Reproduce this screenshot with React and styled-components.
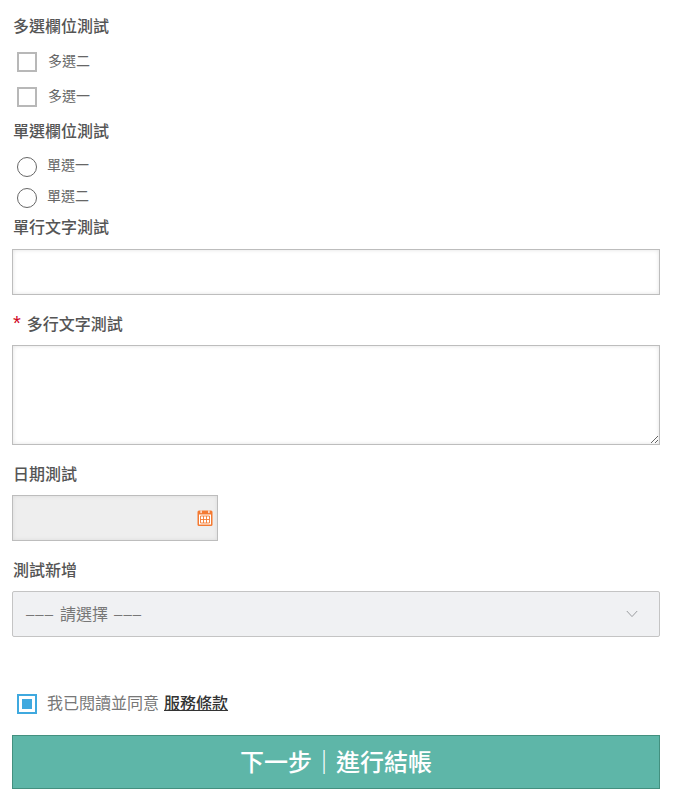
import styled, { createGlobalStyle } from "styled-components";

const GlobalStyle = createGlobalStyle`
    body {
        margin: 0;
        background: #fff;
        font-family: "Noto Sans CJK TC", "Liberation Sans", sans-serif;
        color: #555;
    }
`;

function CalendarIcon() {
    return (
        <svg width="16" height="16" viewBox="0 0 16 16" fill="none">
            <rect x="0.5" y="0.5" width="15" height="15.5" rx="1.5" fill="#f47a32" />
            <rect x="2" y="4.5" width="12" height="10" fill="#fff" />
            <rect x="3.5" y="0.5" width="1.2" height="2.6" fill="#fff" />
            <rect x="11.3" y="0.5" width="1.2" height="2.6" fill="#fff" />
            <path d="M3.5 6h9v7h-9zM6.5 6v7M9.5 6v7M3.5 9.5h9" stroke="#f47a32" strokeWidth="0.9" />
        </svg>
    );
}

function Chevron() {
    return (
        <svg width="12" height="8" viewBox="0 0 12 8" fill="none">
            <path d="M0.8 1l5.2 5.6L11.2 1" stroke="#9a9c9f" strokeWidth="1" />
        </svg>
    );
}

export default function App() {
    return <Page>
        <GlobalStyle />

        <Label>多選欄位測試</Label>
        <CheckList>
            <CheckRow><CheckBox /><CheckText>多選二</CheckText></CheckRow>
            <CheckRow><CheckBox /><CheckText>多選一</CheckText></CheckRow>
        </CheckList>

        <Label>單選欄位測試</Label>
        <RadioList>
            <RadioRow><Radio /><RadioText>單選一</RadioText></RadioRow>
            <RadioRow><Radio /><RadioText>單選二</RadioText></RadioRow>
        </RadioList>

        <Label>單行文字測試</Label>
        <TextField type="text" />

        <Label $gap><Required>*</Required>多行文字測試</Label>
        <TextArea />

        <Label $gap>日期測試</Label>
        <DateBox>
            <CalendarIcon />
        </DateBox>

        <Label $gap>測試新增</Label>
        <SelectBox>
            <SelectText><Dashes>–––</Dashes>請選擇<Dashes>–––</Dashes></SelectText>
            <Chevron />
        </SelectBox>

        <AgreeRow>
            <AgreeBox><AgreeMark /></AgreeBox>
            <AgreeText>我已閱讀並同意</AgreeText>
            <TermsLink href="#">服務條款</TermsLink>
        </AgreeRow>

        <NextButton>下一步<Divider>｜</Divider>進行結帳</NextButton>
    </Page>;
}

const Page = styled.div`
    display: flex;
    flex-direction: column;
    box-sizing: border-box;
    width: 674px;
    height: 805px;
    padding: 17px 14px 0 12px;
    overflow: hidden;
`;

const Label = styled.div`
    display: flex;
    align-items: center;
    box-sizing: border-box;
    height: 20px;
    padding: 0 0 4px 1px;
    margin-top: ${({ $gap }) => ($gap ? "20px" : "0")};
    font-size: 16px;
    font-weight: 500;
    line-height: 20px;
    color: #555;
`;

const Required = styled.span`
    margin-right: 6px;
    color: #d0021b;
    font-size: 20px;
    font-weight: 400;
    font-family: "Liberation Sans", sans-serif;
`;

const CheckList = styled.div`
    display: flex;
    flex-direction: column;
    gap: 15px;
    padding: 15px 0 15px 5px;
`;

const CheckRow = styled.label`
    display: flex;
    align-items: center;
    height: 20px;
`;

const CheckBox = styled.span`
    box-sizing: border-box;
    width: 20px;
    height: 20px;
    border: 2px solid #b8b8b8;
    background: #fff;
`;

const CheckText = styled.span`
    margin: -4px 0 0 11px;
    font-size: 14px;
    color: #666;
`;

const RadioList = styled.div`
    display: flex;
    flex-direction: column;
    gap: 11px;
    padding: 15px 0 10px 5px;
`;

const RadioRow = styled.label`
    display: flex;
    align-items: center;
    height: 20px;
`;

const Radio = styled.span`
    box-sizing: border-box;
    width: 20px;
    height: 20px;
    border: 1px solid #666;
    border-radius: 50%;
    background: #fff;
`;

const RadioText = styled.span`
    margin: -6px 0 0 10px;
    font-size: 14px;
    color: #666;
`;

const TextField = styled.input`
    box-sizing: border-box;
    flex: none;
    width: 648px;
    height: 46px;
    margin-top: 11px;
    border: 1px solid #bdbdbd;
    box-shadow: inset 0 0 4px rgba(0, 0, 0, 0.12);
    outline: none;
`;

const TextArea = styled.textarea`
    display: block;
    box-sizing: border-box;
    flex: none;
    width: 648px;
    height: 100px;
    margin-top: 10px;
    border: 1px solid #bdbdbd;
    box-shadow: inset 0 0 4px rgba(0, 0, 0, 0.12);
    outline: none;
`;

const DateBox = styled.div`
    display: flex;
    align-items: center;
    justify-content: flex-end;
    box-sizing: border-box;
    width: 206px;
    height: 46px;
    margin-top: 10px;
    padding: 0 4px 0 0;
    border: 1px solid #bdbdbd;
    background: #eeeeee;
    box-shadow: inset 0 0 4px rgba(0, 0, 0, 0.08);
`;

const SelectBox = styled.div`
    display: flex;
    align-items: center;
    justify-content: space-between;
    box-sizing: border-box;
    width: 648px;
    height: 46px;
    margin-top: 10px;
    padding: 0 21px 0 13px;
    border: 1px solid #c4c4c4;
    border-radius: 2px;
    background: #f0f1f3;
    font-size: 16px;
    color: #777;
`;

const SelectText = styled.span`
    display: inline-flex;
    align-items: center;
    gap: 6px;
    margin-top: -2px;
`;

const Dashes = styled.span`
    font-family: "Liberation Sans", sans-serif;
    font-size: 15px;
    letter-spacing: 1px;
`;

const AgreeRow = styled.div`
    display: flex;
    align-items: center;
    height: 20px;
    margin-top: 57px;
    padding-left: 5px;
    font-size: 16px;
    line-height: 18px;
`;

const AgreeBox = styled.span`
    display: flex;
    align-items: center;
    justify-content: center;
    box-sizing: border-box;
    width: 20px;
    height: 20px;
    border: 2px solid #3fa9df;
    background: #fff;
`;

const AgreeMark = styled.span`
    width: 10px;
    height: 10px;
    background: #3fa9df;
`;

const AgreeText = styled.span`
    margin: -4px 0 0 10px;
    color: #777;
`;

const TermsLink = styled.a`
    margin: -4px 0 0 5px;
    font-weight: 500;
    color: #333;
    text-decoration: underline;
`;

const NextButton = styled.button`
    box-sizing: border-box;
    width: 648px;
    height: 54px;
    margin-top: 21px;
    padding: 0 0 3px;
    border: 1px solid #43907f;
    background: #5eb6a8;
    color: #fff;
    font-family: inherit;
    font-size: 24px;
    font-weight: 500;
`;

const Divider = styled.span`
    font-weight: 700;
`;
